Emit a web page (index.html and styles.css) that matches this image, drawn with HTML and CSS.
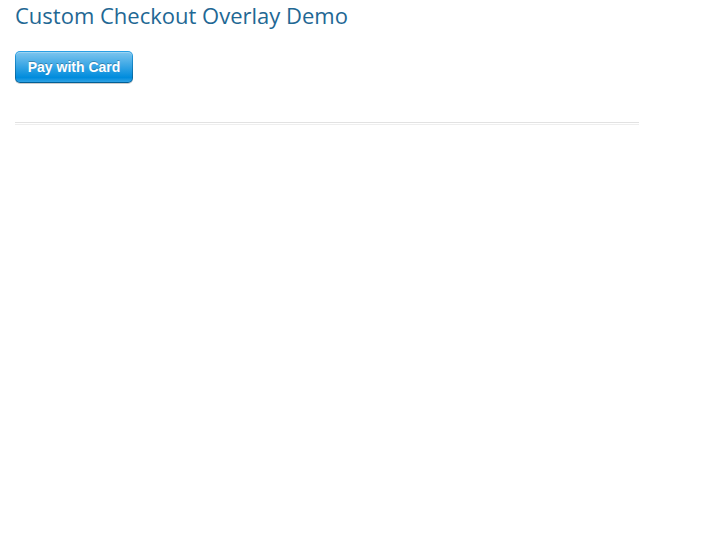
FILE: index.html
```html
<!DOCTYPE html>
<html>
<head>
<meta charset="utf-8">
<title>Custom Checkout Overlay Demo</title>
<link rel="stylesheet" href="styles.css">
</head>
<body>
<div class="page">
  <h1 class="title">Custom Checkout Overlay Demo</h1>
  <button class="stripe-button" type="button"><span class="stripe-button-inner">Pay with Card</span></button>
  <hr class="divider">
</div>
</body>
</html>
```
FILE: styles.css
```css
html, body {
  margin: 0;
  padding: 0;
  background: #ffffff;
}
.page {
  padding: 0 81px 0 15px;
  font-family: "Open Sans", "Liberation Sans", sans-serif;
}
.title {
  margin: 0;
  padding-top: 1px;
  font-size: 22px;
  line-height: 28px;
  font-weight: 400;
  color: #1f6894;
}
.stripe-button {
  display: block;
  margin: 22px 0 0 0;
  padding: 1px;
  border: 0;
  border-radius: 5px;
  background: linear-gradient(#28a0e5, #015e94);
  box-shadow: 0 1px 0 rgba(0,0,0,0.2);
  cursor: pointer;
  width: 118px;
  height: 32px;
}
.stripe-button-inner {
  display: block;
  height: 30px;
  line-height: 30px;
  border-radius: 4px;
  background: linear-gradient(#7dc5ee, #008cdd 85%, #30a2e4);
  font-family: "Liberation Sans", Arial, sans-serif;
  font-size: 14px;
  font-weight: bold;
  color: #ffffff;
  text-shadow: 0 -1px 0 rgba(0,0,0,0.25);
  box-shadow: inset 0 1px 0 rgba(255,255,255,0.25);
}
.divider {
  margin: 39px 0 0 0;
  height: 1px;
  border: 0;
  border-top: 1px solid #e2e2e2;
  border-bottom: 1px solid #eeeeee;
}
```
